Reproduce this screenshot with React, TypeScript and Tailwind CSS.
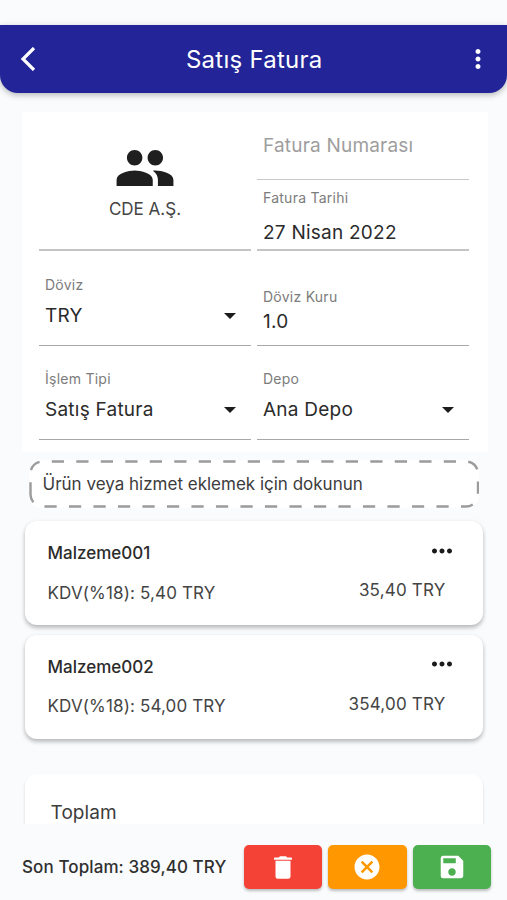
import type { ReactNode } from "react"
import clsx from "clsx"
import { MdCancel, MdGroup, MdMoreHoriz, MdMoreVert, MdSave } from "react-icons/md"

type FieldProps = {
  label: string
  value: string
  select?: boolean
  className?: string
  border?: string
  gap?: string
}

function Field({
  label,
  value,
  select,
  className,
  border = "border-b-[1.5px] border-[#a8a8a8]",
  gap = "mt-2.5",
}: FieldProps) {
  return (
    <div className={clsx("pl-1.5", border, className)}>
      <div className="text-[14px] leading-[18px] tracking-[0.25px] text-[#7c7c7c]">{label}</div>
      <div className={clsx("flex items-center justify-between pr-[15px]", gap)}>
        <span className="text-[19px] leading-6 tracking-[0.24px] text-[#2b2b2b]">{value}</span>
        {select && (
          <svg viewBox="0 0 12 6" className="h-1.5 w-3 fill-[#1c1c1c]">
            <path d="M0 0h12L6 6z" />
          </svg>
        )}
      </div>
    </div>
  )
}

type ItemProps = {
  name: string
  tax: string
  total: string
}

function ItemCard({ name, tax, total }: ItemProps) {
  return (
    <div className="flex h-[104px] justify-between rounded-[12px] bg-white pl-[22.5px] pr-[29px] shadow-[0_3px_4px_rgba(0,0,0,0.22),0_1px_5px_rgba(0,0,0,0.08)]">
      <div className="pt-5">
        <div className="text-[17px] font-medium leading-6 text-[#2b2b2b]">{name}</div>
        <div className="mt-[15.5px] text-[17px] leading-6 tracking-[0.14px] text-[#444]">{tax}</div>
      </div>
      <div className="flex flex-col items-end pt-[14.5px] pr-2">
        <MdMoreHoriz className="-mr-[11px] size-[30px] text-[#1a1a1a]" />
        <div className="mt-[12.5px] text-[17px] leading-6 tracking-[0.2px] text-[#444]">{total}</div>
      </div>
    </div>
  )
}

function TrashIcon() {
  return (
    <svg viewBox="0 0 18 23" className="h-[23px] w-[18px] fill-current">
      <path d="M.8 1.4h4.1C5.3.5 6 .2 6.8.2h4.4c.8 0 1.5.3 1.9 1.2h4.1c.5 0 .8.3.8.8v1.5H0V2.2c0-.5.3-.8.8-.8zM1.5 4.700h15v15.800a2.300 2.300 0 0 1-2.300 2.300H3.800a2.300 2.300 0 0 1-2.300-2.300z" />
    </svg>
  )
}

function ActionButton({ label, className, children }: { label: string; className: string; children: ReactNode }) {
  return (
    <button
      type="button"
      aria-label={label}
      className={clsx(
        "grid h-11 w-[78.5px] place-items-center rounded-[5px] text-white shadow-[0_2px_3px_rgba(0,0,0,0.25)]",
        className
      )}
    >
      {children}
    </button>
  )
}

export default function App() {
  return (
    <div className="flex h-[900px] w-[507px] flex-col overflow-hidden bg-[#fafbfd] font-['Inter','Liberation_Sans',sans-serif]">
      {/* App bar */}
      <header className="mt-[25px] flex h-[67.5px] shrink-0 items-center justify-between rounded-b-[18px] bg-[#222498] pl-[19.5px] pr-[14px] text-white shadow-[0_2px_6px_rgba(0,0,0,0.28)]">
        <svg viewBox="0 0 16 24" className="h-6 w-4" fill="none" stroke="currentColor" strokeWidth="3.2">
          <path d="M14 1 3 12l11 11" />
        </svg>
        <h1 className="pl-[10px] pt-0.5 text-[24px] leading-8 tracking-[0.25px]">Satış Fatura</h1>
        <MdMoreVert className="size-[30px]" />
      </header>

      <main className="min-h-0 flex-1 overflow-hidden pt-[19.5px]">
        {/* Invoice details */}
        <section className="ml-[22px] grid h-[340px] w-[466px] grid-cols-[212px_212px] content-start gap-x-1.5 bg-white pl-[17px]">
          <div className="flex h-[139px] flex-col items-center border-b-2 border-[#c4c4c4] pt-[25px]">
            <MdGroup className="size-[62px] text-[#1f1f1f]" />
            <span className="-mt-0.5 text-[17px] leading-6 text-[#444]">CDE A.Ş.</span>
          </div>
          <div>
            <div className="h-[68px] border-b border-[#c8c8c8] pl-1.5 pt-[22px] text-[19px] leading-6 tracking-[0.2px] text-[#9e9e9e]">
              Fatura Numarası
            </div>
            <Field
              label="Fatura Tarihi"
              value="27 Nisan 2022"
              border="border-b-2 border-[#c4c4c4]"
              className="h-[71px] pt-[9px]"
              gap="mt-[14px]"
            />
          </div>
          <Field label="Döviz" value="TRY" select className="h-[95px] pt-[25px]" />
          <Field label="Döviz Kuru" value="1.0" className="h-[95px] pt-[37px]" gap="mt-1" />
          <Field label="İşlem Tipi" value="Satış Fatura" select className="h-[94px] pt-6" />
          <Field label="Depo" value="Ana Depo" select className="h-[94px] pt-6" />
        </section>

        {/* Add item */}
        <button
          type="button"
          className="relative ml-[29px] mt-2 flex h-12 w-[450px] rounded-[12px] bg-white pl-[13.5px] pt-3 text-left"
        >
          <svg viewBox="0 0 450 48" className="absolute inset-0 h-12 w-[450px]" fill="none">
            <path
              d="M1.5 34.5V13.5a12 12 0 0 1 12-12H437a12 12 0 0 1 12 12v21a12 12 0 0 1-12 12H13.5a12 12 0 0 1-12-12"
              stroke="#9b9b9b"
              strokeWidth="2.4"
              strokeDasharray="12.25 12.25"
            />
          </svg>
          <span className="relative text-[17px] leading-6 text-[#3c3c3c]">
            Ürün veya hizmet eklemek için dokunun
          </span>
        </button>

        <div className="ml-[25px] mt-[13px] flex w-[457.5px] flex-col gap-[9.5px]">
          <ItemCard name="Malzeme001" tax="KDV(%18): 5,40 TRY" total="35,40 TRY" />
          <ItemCard name="Malzeme002" tax="KDV(%18): 54,00 TRY" total="354,00 TRY" />
        </div>

        {/* Totals */}
        <div className="ml-[25px] mt-[35px] h-[120px] w-[457.5px] rounded-[12px] bg-white pl-[25.5px] pt-[27px] text-[19px] leading-6 tracking-[0.1px] text-[#3c3c3c] shadow-[0_2px_3px_rgba(0,0,0,0.14)]">
          Toplam
        </div>
      </main>

      <footer className="flex h-[76px] shrink-0 items-start justify-between pl-[22px] pr-4 pt-[21px]">
        <span className="pt-[10px] text-[17px] font-medium leading-6 tracking-[0.1px] text-[#2f2f2f]">
          Son Toplam: 389,40 TRY
        </span>
        <div className="flex gap-1.5">
          <ActionButton label="Sil" className="bg-[#f44336]">
            <TrashIcon />
          </ActionButton>
          <ActionButton label="İptal" className="bg-[#ff9800]">
            <MdCancel className="size-[30px]" />
          </ActionButton>
          <ActionButton label="Kaydet" className="bg-[#4caf50]">
            <MdSave className="size-[30px]" />
          </ActionButton>
        </div>
      </footer>
    </div>
  )
}
